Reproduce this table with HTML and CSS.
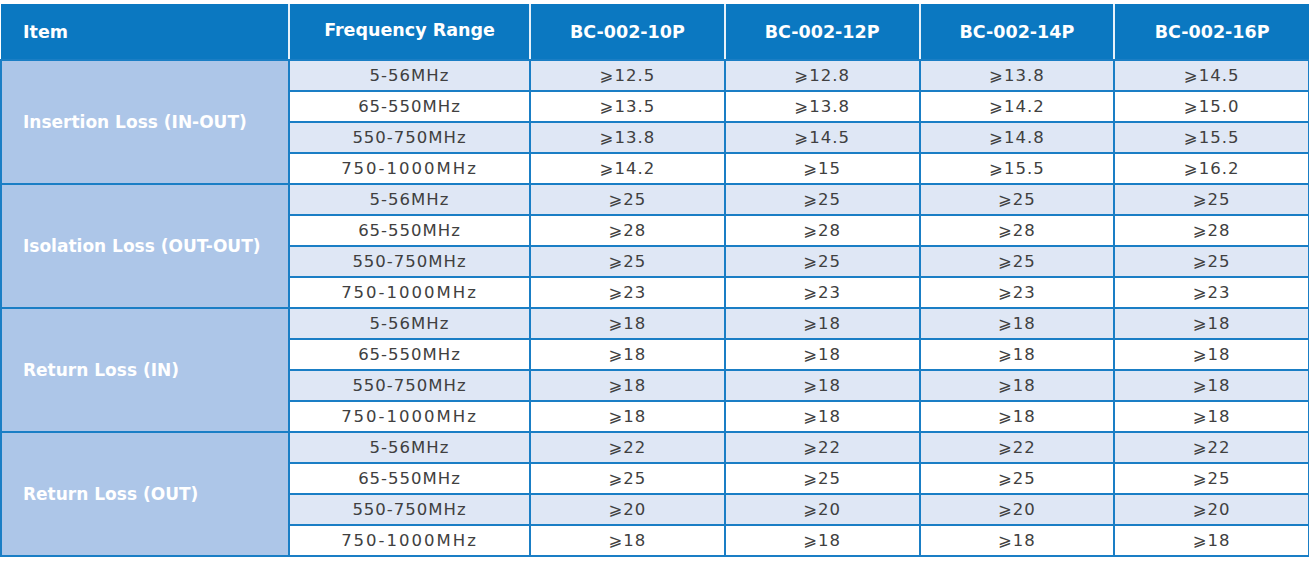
FILE: index.html
```html
<!DOCTYPE html>
<html lang="en">
<head>
<meta charset="utf-8">
<title>BC-002 Specifications</title>
<link rel="stylesheet" href="styles.css">
</head>
<body>
<table class="spec">
  <colgroup>
    <col class="c-item">
    <col class="c-freq">
    <col class="c-model">
    <col class="c-model">
    <col class="c-model">
    <col class="c-model">
  </colgroup>
  <thead>
    <tr>
      <th class="h-item">Item</th>
      <th class="h-freq">Frequency Range</th>
      <th>BC-002-10P</th>
      <th>BC-002-12P</th>
      <th>BC-002-14P</th>
      <th>BC-002-16P</th>
    </tr>
  </thead>
  <tbody>
    <tr class="alt"><td class="label" rowspan="4">Insertion Loss (IN-OUT)</td><td>5-56MHz</td><td>⩾12.5</td><td>⩾12.8</td><td>⩾13.8</td><td>⩾14.5</td></tr>
    <tr><td>65-550MHz</td><td>⩾13.5</td><td>⩾13.8</td><td>⩾14.2</td><td>⩾15.0</td></tr>
    <tr class="alt"><td>550-750MHz</td><td>⩾13.8</td><td>⩾14.5</td><td>⩾14.8</td><td>⩾15.5</td></tr>
    <tr><td class="wide">750-1000MHz</td><td>⩾14.2</td><td>⩾15</td><td>⩾15.5</td><td>⩾16.2</td></tr>

    <tr class="alt"><td class="label" rowspan="4">Isolation Loss (OUT-OUT)</td><td>5-56MHz</td><td>⩾25</td><td>⩾25</td><td>⩾25</td><td>⩾25</td></tr>
    <tr><td>65-550MHz</td><td>⩾28</td><td>⩾28</td><td>⩾28</td><td>⩾28</td></tr>
    <tr class="alt"><td>550-750MHz</td><td>⩾25</td><td>⩾25</td><td>⩾25</td><td>⩾25</td></tr>
    <tr><td class="wide">750-1000MHz</td><td>⩾23</td><td>⩾23</td><td>⩾23</td><td>⩾23</td></tr>

    <tr class="alt"><td class="label" rowspan="4">Return Loss (IN)</td><td>5-56MHz</td><td>⩾18</td><td>⩾18</td><td>⩾18</td><td>⩾18</td></tr>
    <tr><td>65-550MHz</td><td>⩾18</td><td>⩾18</td><td>⩾18</td><td>⩾18</td></tr>
    <tr class="alt"><td>550-750MHz</td><td>⩾18</td><td>⩾18</td><td>⩾18</td><td>⩾18</td></tr>
    <tr><td class="wide">750-1000MHz</td><td>⩾18</td><td>⩾18</td><td>⩾18</td><td>⩾18</td></tr>

    <tr class="alt"><td class="label" rowspan="4">Return Loss (OUT)</td><td>5-56MHz</td><td>⩾22</td><td>⩾22</td><td>⩾22</td><td>⩾22</td></tr>
    <tr><td>65-550MHz</td><td>⩾25</td><td>⩾25</td><td>⩾25</td><td>⩾25</td></tr>
    <tr class="alt"><td>550-750MHz</td><td>⩾20</td><td>⩾20</td><td>⩾20</td><td>⩾20</td></tr>
    <tr><td class="wide">750-1000MHz</td><td>⩾18</td><td>⩾18</td><td>⩾18</td><td>⩾18</td></tr>
  </tbody>
</table>
</body>
</html>
```

FILE: styles.css
```css
html, body {
  margin: 0;
  padding: 0;
  background: #ffffff;
}

body {
  padding-top: 4px;
  font-family: "DejaVu Sans", "Open Sans", sans-serif;
}

.spec {
  width: 1308px;
  border-collapse: collapse;
  table-layout: fixed;
}

.c-item { width: 288px; }
.c-freq { width: 241px; }
.c-model { width: 194.75px; }

.spec thead th {
  background: #0b78c1;
  color: #ffffff;
  height: 51px;
  padding: 0;
  font-size: 17.5px;
  font-weight: 700;
  text-align: center;
  border-left: 2px solid #e6f1fa;
  border-bottom: 2px solid #1a7ec5;
}

.spec thead th.h-item {
  text-align: left;
  padding-left: 22px;
  border-left: none;
}

.spec thead th.h-freq {
  padding-bottom: 4px;
}

.spec tbody td {
  height: 29px;
  padding: 0;
  border: 2px solid #1a7ec5;
  text-align: center;
  font-size: 16.5px;
  letter-spacing: 1px;
  color: #404040;
  background: #ffffff;
}

.spec tbody td.wide {
  letter-spacing: 2px;
}

.spec tbody tr.alt td {
  background: #dfe7f5;
}

.spec tbody td.label,
.spec tbody tr.alt td.label {
  background: #adc6e8;
  color: #ffffff;
  font-weight: 700;
  font-size: 17px;
  letter-spacing: 0;
  text-align: left;
  padding-left: 21px;
}
```
